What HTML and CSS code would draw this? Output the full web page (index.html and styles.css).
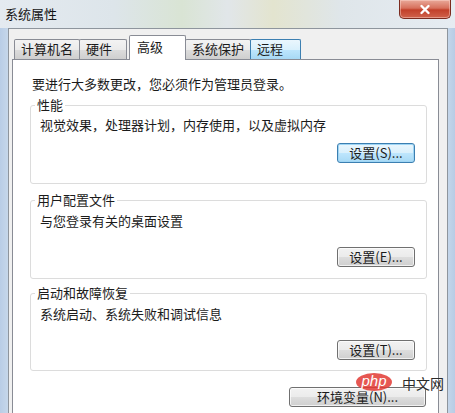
FILE: index.html
```html
<!DOCTYPE html>
<html lang="zh-CN">

<head>
    <meta charset="UTF-8">
    <meta name="viewport" content="width=device-width, initial-scale=1.0">
    <title>系统属性</title>
    <link rel="stylesheet" href="styles.css">
</head>

<body>
    <div class="window">
        <div class="titlebar">
            <span class="title">系统属性</span>
            <button class="close-btn" aria-label="关闭">
                <svg width="12" height="11" viewBox="0 0 12 11">
                    <path d="M2.5 2 L9.5 9 M9.5 2 L2.5 9" stroke="#fff" stroke-width="2.4" stroke-linecap="round" />
                </svg>
            </button>
        </div>

        <div class="dialog">
            <div class="tabs">
                <div class="tab">计算机名</div>
                <div class="tab">硬件</div>
                <div class="tab active">高级</div>
                <div class="tab">系统保护</div>
                <div class="tab hover">远程</div>
            </div>

            <div class="panel">
                <p class="intro">要进行大多数更改，您必须作为管理员登录。</p>

                <fieldset class="group group-first">
                    <legend>性能</legend>
                    <p>视觉效果，处理器计划，内存使用，以及虚拟内存</p>
                    <button class="btn focused">设置(S)...</button>
                </fieldset>

                <fieldset class="group group-second">
                    <legend>用户配置文件</legend>
                    <p>与您登录有关的桌面设置</p>
                    <button class="btn">设置(E)...</button>
                </fieldset>

                <fieldset class="group group-third">
                    <legend>启动和故障恢复</legend>
                    <p>系统启动、系统失败和调试信息</p>
                    <button class="btn">设置(T)...</button>
                </fieldset>

                <div class="actions">
                    <button class="btn btn-wide">环境变量(N)...</button>
                </div>
            </div>
        </div>

        <div class="watermark">
            <span class="php">php</span>
            <span class="cn">中文网</span>
        </div>
    </div>
</body>

</html>
```

FILE: styles.css
```css
* {
    box-sizing: border-box;
}

body {
    margin: 0;
    width: 455px;
    height: 413px;
    overflow: hidden;
    font-family: "Noto Sans CJK SC", "Noto Sans", sans-serif;
    font-size: 13px;
    color: #1b1b1b;
}

.window {
    position: relative;
    height: 413px;
    display: flex;
    flex-direction: column;
    padding: 0 7px 0 8px;
    background: linear-gradient(90deg, #b9cde6 0, #c6d7ea 8px, #dfe7ef 40px, #dfe7ef 420px, #c4d6ea 448px, #b8cce5 100%);
}

.titlebar {
    height: 28px;
    display: flex;
    justify-content: space-between;
    align-items: flex-start;
    margin: 0 -7px 0 -8px;
    padding: 0 4px 0 5px;
    background: linear-gradient(90deg, #e4eaf0 0%, #dde5ea 25%, #d9e4d4 40%, #e1e6e9 50%, #e3e4cf 60%, #dfe6ea 75%, #e6ecf2 100%);
}

.title {
    line-height: 28px;
    color: #141414;
}

.close-btn {
    width: 52px;
    height: 19px;
    margin: 0;
    padding: 0;
    border: 1px solid #7b2b1f;
    border-top: none;
    border-radius: 0 0 5px 5px;
    background: linear-gradient(180deg, #e9a999 0%, #d7705c 45%, #c2402a 55%, #d0634c 100%);
    box-shadow: inset 0 0 0 1px rgba(255, 220, 210, 0.45);
    display: flex;
    align-items: center;
    justify-content: center;
    cursor: pointer;
}

.dialog {
    flex: 1;
    display: flex;
    flex-direction: column;
    background: #f0f0f0;
    border: 1px solid #8e959d;
    border-bottom: none;
    padding: 6px 8px 0 3px;
}

.tabs {
    display: flex;
    align-items: flex-end;
    margin-left: 2px;
    position: relative;
    z-index: 1;
}

.tab {
    height: 20px;
    min-width: 48px;
    padding: 0 6px;
    line-height: 18px;
    border: 1px solid #898c95;
    border-bottom: none;
    margin-left: -1px;
    background: linear-gradient(180deg, #f3f3f3 0%, #ebebeb 50%, #dddddd 51%, #cfcfcf 100%);
    border-radius: 2px 2px 0 0;
}

.tab:first-child {
    margin-left: 0;
}

.tab.active {
    height: 25px;
    min-width: 57px;
    margin: 0 0 -1px 2px;
    padding: 2px 7px 0;
    background: #fff;
}

.tab.hover {
    min-width: 51px;
    border-color: #3c7fb1;
    background: linear-gradient(180deg, #eaf6fd 0%, #d9f0fc 50%, #bee6fd 51%, #a7d9f5 100%);
}

.panel {
    flex: 1;
    background: #fff;
    border: 1px solid #898c95;
    border-bottom: none;
    padding: 15px 11px 0 17px;
}

.panel p {
    margin: 0;
    line-height: 18px;
}

.intro {
    padding-left: 2px;
    margin-bottom: 3px !important;
}

.group {
    margin: 0;
    padding: 3px 11px 11px 9px;
    border: 1px solid #dcdcdc;
    border-radius: 3px;
    display: flex;
    flex-direction: column;
    min-inline-size: 0;
}

.group legend {
    margin-left: -5px;
    padding: 0 2px;
    line-height: 18px;
}

.group .btn {
    align-self: flex-end;
    margin-top: 17px;
}

.group-first {
    padding-top: 2px;
    padding-bottom: 20px;
}

.group-first .btn {
    margin-top: 9px;
}

.group-second {
    margin-top: 7px;
}

.group-third {
    margin-top: 5px;
    padding-bottom: 10px;
}

.btn {
    width: 78px;
    height: 20px;
    padding: 0;
    font-family: inherit;
    font-size: 13px;
    line-height: 18px;
    color: #1b1b1b;
    border: 1px solid #707070;
    border-radius: 3px;
    background: linear-gradient(180deg, #f2f2f2 0%, #ebebeb 50%, #dddddd 51%, #cfcfcf 100%);
    box-shadow: inset 0 0 0 1px rgba(255, 255, 255, 0.7);
    cursor: pointer;
}

.btn.focused {
    border-color: #3c7fb1;
    background: linear-gradient(180deg, #eaf6fd 0%, #d9f0fc 50%, #bee6fd 51%, #a7d9f5 100%);
    box-shadow: inset 0 0 0 1px #9fd5f4;
}

.actions {
    display: flex;
    justify-content: flex-end;
    margin-top: 16px;
    padding-right: 1px;
}

.btn-wide {
    width: 137px;
}

/* watermark sits over the bottom right corner */
.watermark {
    position: absolute;
    left: 356px;
    top: 373px;
    display: flex;
    align-items: center;
    gap: 10px;
}

.watermark .php {
    display: inline-block;
    width: 36px;
    height: 18px;
    border-radius: 50%;
    background: rgba(226, 58, 52, 0.85);
    color: #fff;
    font-family: "Liberation Sans", Arial, sans-serif;
    font-style: italic;
    font-size: 15px;
    line-height: 16px;
    text-align: center;
}

.watermark .cn {
    font-size: 14px;
    line-height: 16px;
    color: #2b2b2b;
    margin-top: 1px;
}
```
